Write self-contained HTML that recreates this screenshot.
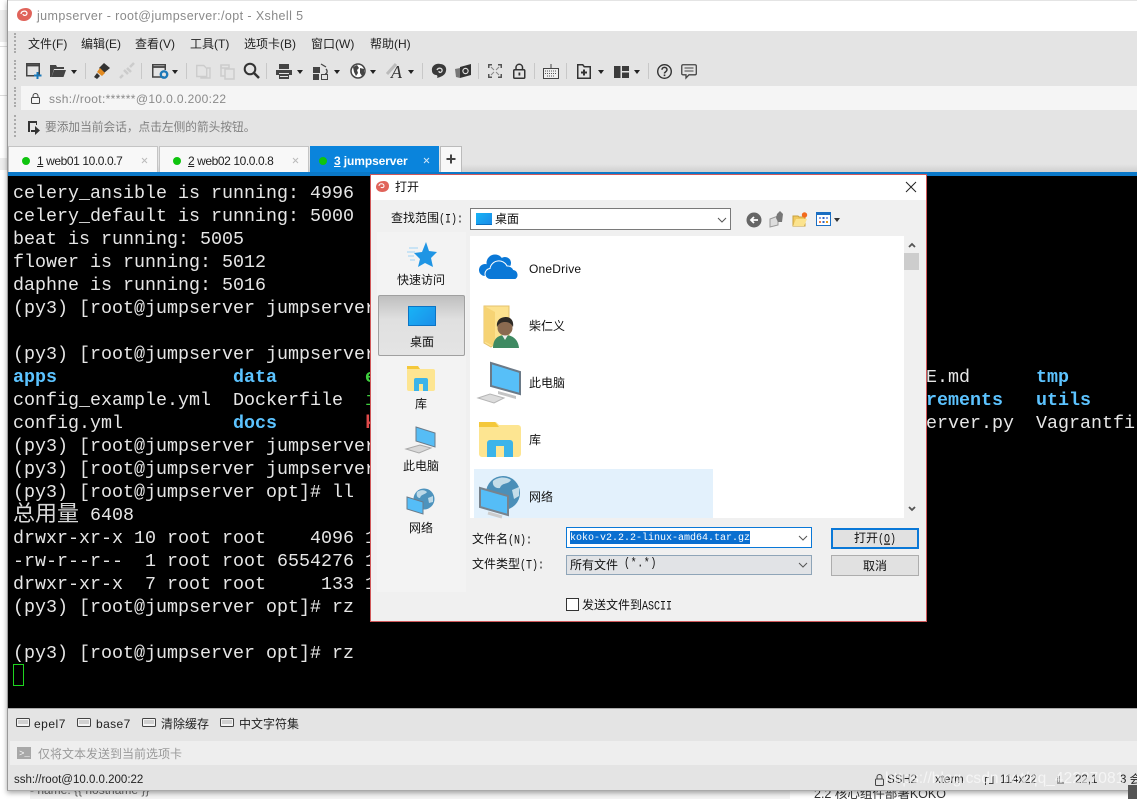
<!DOCTYPE html>
<html><head><meta charset="utf-8"><style>
html,body{margin:0;padding:0;width:1137px;height:799px;overflow:hidden;background:#fff}
body{position:relative;font-family:"Liberation Sans","Noto Sans CJK SC",sans-serif;font-size:12px;color:#222}
.a{position:absolute;white-space:pre;line-height:16px}
.b{position:absolute}
svg{position:absolute;overflow:visible}
.t{position:absolute;left:13px;font-family:"Liberation Mono","Noto Sans CJK SC",monospace;font-size:18.33px;line-height:23px;color:#e6e6e6;white-space:pre}
.bl{color:#5cc3ff;font-weight:bold}
.sep{position:absolute;width:1px;height:16px;background:#c8c8c8;top:63px}
.grip{position:absolute;left:14px;width:2px;border-left:2px dotted #aaa}
.tb{stroke:#444;fill:none;stroke-width:1.5}
.arr{position:absolute;width:0;height:0;border-left:3.5px solid transparent;border-right:3.5px solid transparent;border-top:4px solid #222;top:70px}
.m{top:36px;color:#222}
.d{color:#111;font-family:"Liberation Sans","WenQuanYi Zen Hei","Noto Sans CJK SC",sans-serif}
.p{font-family:"Liberation Mono",monospace;font-size:10px;display:inline-block;transform:scaleY(1.25)}
</style></head><body>
<!-- left backdrop -->
<div class="b" style="left:0;top:0;width:8px;height:799px;background:#fff"></div>
<div class="b" style="left:0;top:10px;width:8px;height:32px;background:#eee"></div>
<div class="b" style="left:0;top:46px;width:8px;height:1px;background:#ddd"></div>
<div class="b" style="left:0;top:95px;width:8px;height:1px;background:#ddd"></div>
<div class="b" style="left:0;top:158px;width:8px;height:12px;background:#eee"></div>
<div class="b" style="left:30px;top:780px;width:760px;height:19px;background:#f4f4f4"></div>
<div class="a" style="left:30px;top:782px;color:#666">- name: {{ hostname }}</div>
<div class="a" style="left:814px;top:786px;font-size:12.5px;color:#333">2.2 核心组件部署KOKO</div>

<!-- main window -->
<div class="b" style="left:7px;top:0;width:1130px;height:791px;background:#e4e4e4;box-shadow:0 2px 5px rgba(0,0,0,.35);border-left:1px solid #999;border-bottom:1px solid #aaa;box-sizing:border-box"></div>
<div class="b" style="left:8px;top:1px;width:1129px;height:30px;background:#fff"></div>
<svg style="left:16px;top:7px" width="17" height="15" viewBox="0 0 17 15"><path d="M1 8C1 3 6 1 10 1c3 0 6 2 6 5 0 5-4 8-8 8-4 0-7-2-7-6z" fill="#e0635a"/><path d="M5 7c0-3 5-4 6-1 0 3-4 3-4 1" fill="none" stroke="#fff" stroke-width="1.2"/></svg>
<div class="a" style="left:37px;top:8px;font-size:12.5px;color:#8a8a8a;letter-spacing:.4px">jumpserver - root@jumpserver:/opt - Xshell 5</div>

<!-- menu -->
<div class="grip" style="top:33px;height:20px"></div>
<div class="grip" style="top:60px;height:20px"></div>
<div class="grip" style="top:87px;height:20px"></div>
<div class="grip" style="top:115px;height:22px"></div>
<div class="a m" style="left:28px">文件(F)</div>
<div class="a m" style="left:81px">编辑(E)</div>
<div class="a m" style="left:135px">查看(V)</div>
<div class="a m" style="left:190px">工具(T)</div>
<div class="a m" style="left:244px">选项卡(B)</div>
<div class="a m" style="left:311px">窗口(W)</div>
<div class="a m" style="left:370px">帮助(H)</div>

<!-- toolbar -->
<svg style="left:26px;top:63px" width="16" height="16"><rect x=".75" y=".75" width="12.5" height="12" class="tb"/><path d="M1 2.500h12" stroke="#444" stroke-width="1.800"/><path d="M11.500 9v7M8 12.500h7.500" stroke="#1b78b8" stroke-width="2"/></svg>
<svg style="left:50px;top:64px" width="16" height="14"><path d="M0 1h6l1 2h7v2H4L1.500 13H0z" fill="#444"/><path d="M4 6h12l-2.500 7H1.500z" fill="#444"/></svg>
<div class="arr" style="left:71px"></div>
<div class="sep" style="left:85px"></div>
<svg style="left:93px;top:62px" width="18" height="18"><path d="M11 1l6 5-6 5-5-5z" fill="#333"/><path d="M7 6l5 5-3 3-5-4z" fill="#e28a20"/><path d="M4 11l3 3-3 3-3-2z" fill="#333"/></svg>
<svg style="left:118px;top:62px" width="18" height="18"><path d="M2 16l3-3M6 8l4 4M9 6l4 4M12 5l4-4" stroke="#ccc" stroke-width="2.500" fill="none"/></svg>
<div class="sep" style="left:141px"></div>
<svg style="left:152px;top:64px" width="18" height="16"><path d="M12 13H.75V.75h12.500V6" class="tb"/><path d="M1 3h12" stroke="#444" stroke-width="1.800"/><circle cx="12" cy="10.500" r="3.200" fill="none" stroke="#1b78b8" stroke-width="2.400"/></svg>
<div class="arr" style="left:172px"></div>
<div class="sep" style="left:186px"></div>
<svg style="left:196px;top:64px" width="15" height="15"><path d="M.75 1.500h7l3 3v8h-10zM11 4h3v10H5v-1" fill="none" stroke="#ccc" stroke-width="1.400"/></svg>
<svg style="left:220px;top:64px" width="15" height="15"><path d="M1 1h8v3H1zM5 5h9v10H5z" fill="none" stroke="#ccc" stroke-width="1.500"/><path d="M1 1v11h4" fill="none" stroke="#ccc" stroke-width="1.500"/></svg>
<svg style="left:243px;top:62px" width="17" height="17"><circle cx="7" cy="7" r="5.300" fill="none" stroke="#333" stroke-width="2"/><path d="M11 11l5 5" stroke="#333" stroke-width="2.500"/></svg>
<div class="sep" style="left:266px"></div>
<svg style="left:276px;top:64px" width="16" height="15"><path d="M3 0h10v5H3zM0 6h16v5h-3v4H3v-4H0z" fill="#444"/><path d="M3 9h10v1H3zM4 12h8v1H4z" fill="#e4e4e4"/></svg>
<div class="arr" style="left:297px"></div>
<svg style="left:313px;top:63px" width="17" height="17"><rect x="0" y="4" width="7" height="6" fill="#444"/><rect x="0" y="11" width="6" height="6" fill="#444"/><rect x="8.500" y="11.500" width="6" height="5" fill="none" stroke="#444"/><path d="M8 1l5 3M13 6c2 2 1 5-1 5" fill="none" stroke="#444" stroke-width="1.300"/></svg>
<div class="arr" style="left:334px"></div>
<svg style="left:350px;top:63px" width="16" height="16"><circle cx="8" cy="8" r="7" fill="#fff" stroke="#444" stroke-width="1.500"/><path d="M3 4l4-2 2 3-2 2 1 3-2 3-2-4zM10 5l4 1v5l-2 2-2-3z" fill="#444"/></svg>
<div class="arr" style="left:370px"></div>
<svg style="left:386px;top:62px" width="18" height="18"><path d="M1 12L10 2" stroke="#bbb" stroke-width="3"/><text x="5" y="16" font-family="Liberation Serif" font-style="italic" font-size="18" fill="#333">A</text></svg>
<div class="arr" style="left:408px"></div>
<div class="sep" style="left:422px"></div>
<svg style="left:431px;top:63px" width="16" height="16"><path d="M1 8C0 3 5 0 9 1c4 0 7 3 6 7-1 5-6 6-9 7 1-2 0-3-1-3-2 0-4-2-4-4z" fill="#3a3a3a"/><path d="M6 7c1-3 6-2 5 1-1 2-3 2-3 0" fill="none" stroke="#ddd" stroke-width="1.300"/></svg>
<svg style="left:455px;top:63px" width="17" height="16"><path d="M0 6l5-1v10l-4-1z" fill="#777"/><path d="M5 4l11-3v11L5 15z" fill="#333"/><circle cx="10.500" cy="8" r="2.600" fill="none" stroke="#ddd" stroke-width="1.200"/></svg>
<div class="sep" style="left:478px"></div>
<svg style="left:488px;top:64px" width="14" height="14"><path d="M0 0h4v1.500H1.500V4H0zM10 0h4v4h-1.500V1.500H10zM0 10h1.500v2.500H4V14H0zM14 10v4h-4v-1.500h2.500V10z" fill="#555"/><path d="M3 3l3 3M11 3L8 6M3 11l3-3M11 11L8 8" stroke="#888"/></svg>
<svg style="left:513px;top:63px" width="13" height="16"><rect x=".75" y="6.750" width="11" height="8.500" rx="1" fill="none" stroke="#333" stroke-width="1.500"/><path d="M3 7V4a3.300 3.300 0 0 1 6.500 0v3" fill="none" stroke="#333" stroke-width="1.500"/><rect x="5.500" y="9.500" width="1.800" height="3" fill="#333"/></svg>
<div class="sep" style="left:534px"></div>
<svg style="left:543px;top:64px" width="16" height="15"><rect x=".5" y="4.500" width="15" height="10" fill="#f0f0f0" stroke="#444"/><path d="M2 7h12M2 9.500h12M4 12h8" stroke="#555" stroke-dasharray="1 1"/><path d="M8 0v4" stroke="#444"/></svg>
<div class="sep" style="left:566px"></div>
<svg style="left:577px;top:64px" width="14" height="15"><path d="M.75.750h5l1.500 2h6v11.500H.75z" fill="none" stroke="#333" stroke-width="1.500"/><path d="M7 5.500v6M4 8.500h6" stroke="#333" stroke-width="2"/></svg>
<div class="arr" style="left:598px"></div>
<svg style="left:614px;top:66px" width="15" height="12"><rect width="6.500" height="12" fill="#3c3c3c"/><rect x="8" width="7" height="5" fill="#3c3c3c"/><rect x="8" y="6.500" width="7" height="5.500" fill="#3c3c3c"/></svg>
<div class="arr" style="left:634px"></div>
<div class="sep" style="left:648px"></div>
<svg style="left:657px;top:64px" width="15" height="15"><circle cx="7.500" cy="7.500" r="6.800" fill="none" stroke="#333" stroke-width="1.400"/><path d="M5 5.800c0-3.300 5-3.300 5 0 0 2-2.500 1.800-2.500 3.700" fill="none" stroke="#333" stroke-width="1.500"/><rect x="6.700" y="10.500" width="1.600" height="1.600" fill="#333"/></svg>
<svg style="left:681px;top:64px" width="16" height="16"><path d="M2 .75h12a1.300 1.300 0 0 1 1.300 1.300v7.500A1.300 1.300 0 0 1 14 10.800H8L5 14v-3.200H2A1.300 1.300 0 0 1 .75 9.500V2A1.300 1.300 0 0 1 2 .75z" fill="none" stroke="#444" stroke-width="1.300"/><path d="M3.500 4h9M3.500 7h9" stroke="#444"/></svg>

<!-- address -->
<div class="b" style="left:21px;top:86px;width:1116px;height:24px;background:#f5f5f5"></div>
<svg style="left:31px;top:93px" width="9" height="11"><rect x=".5" y="4.500" width="8" height="6" rx="1" fill="none" stroke="#444"/><path d="M2 4.500V3a2.500 2.500 0 0 1 5 0v1.500" fill="none" stroke="#444"/></svg>
<div class="a" style="left:49px;top:91px;color:#8a8a8a;font-size:12px;letter-spacing:.36px">ssh://root:******@10.0.0.200:22</div>

<!-- hint -->
<svg style="left:27px;top:121px" width="13" height="14"><path d="M1 0h9v4H9V2H3v9H1z" fill="#333"/><path d="M4 9h4V5l5 4.500L8 14v-3H4z" fill="#333"/></svg>
<div class="a" style="left:45px;top:120px;color:#808080;font-size:11.7px">要添加当前会话，点击左侧的箭头按钮。</div>

<!-- tabs -->
<div class="b" style="left:8px;top:146px;width:1129px;height:26px;background:linear-gradient(#e4e4e4 70%,#cfcfcf)"></div>
<div class="b" style="left:8px;top:146px;width:150px;height:26px;background:#f8f8f8;border:1px solid #c4c4c4;box-sizing:border-box;border-bottom:0"></div>
<div class="b" style="left:159px;top:146px;width:150px;height:26px;background:#f8f8f8;border:1px solid #c4c4c4;box-sizing:border-box;border-bottom:0"></div>
<div class="b" style="left:310px;top:146px;width:129px;height:26px;background:#0a84dc"></div>
<div class="b" style="left:440px;top:146px;width:22px;height:26px;background:#f8f8f8;border:1px solid #bbb;box-sizing:border-box;border-bottom:0"></div>
<div class="b" style="left:22px;top:157px;width:8px;height:8px;border-radius:50%;background:#0fc40f"></div>
<div class="b" style="left:173px;top:157px;width:8px;height:8px;border-radius:50%;background:#0fc40f"></div>
<div class="b" style="left:319px;top:157px;width:8px;height:8px;border-radius:50%;background:#0fc40f"></div>
<div class="a" style="left:37px;top:153px;letter-spacing:-.42px"><u>1</u> web01 10.0.0.7</div>
<div class="a" style="left:188px;top:153px;letter-spacing:-.42px"><u>2</u> web02 10.0.0.8</div>
<div class="a" style="left:334px;top:153px;color:#fff;font-weight:bold;letter-spacing:-.1px"><u>3</u> jumpserver</div>
<svg style="left:141px;top:157px" width="8" height="8"><path d="M1 1l5 5M6 1L1 6" stroke="#bbb"/></svg>
<svg style="left:292px;top:157px" width="8" height="8"><path d="M1 1l5 5M6 1L1 6" stroke="#bbb"/></svg>
<svg style="left:423px;top:157px" width="8" height="8"><path d="M1 1l5 5M6 1L1 6" stroke="#cfe6f8"/></svg>
<svg style="left:446px;top:154px" width="11" height="11"><path d="M5 .500v9M.500 5h9" stroke="#444" stroke-width="2"/></svg>
<div class="b" style="left:8px;top:172px;width:1129px;height:4px;background:#0a78c8"></div>

<!-- terminal -->
<div class="b" style="left:8px;top:176px;width:1129px;height:532px;background:#000;overflow:hidden"></div>
<div class="t" style="top:182px">celery_ansible is running: 4996</div>
<div class="t" style="top:205px">celery_default is running: 5000</div>
<div class="t" style="top:228px">beat is running: 5005</div>
<div class="t" style="top:251px">flower is running: 5012</div>
<div class="t" style="top:274px">daphne is running: 5016</div>
<div class="t" style="top:297px">(py3) [root@jumpserver jumpserver</div>
<div class="t" style="top:343px">(py3) [root@jumpserver jumpserver</div>
<div class="t bl" style="top:366px">apps</div>
<div class="t bl" style="top:366px;left:233px">data</div>
<div class="t" style="top:366px;left:365px;color:#3fd03f;font-weight:bold">e</div>
<div class="t" style="top:389px">config_example.yml</div>
<div class="t" style="top:389px;left:233px">Dockerfile</div>
<div class="t" style="top:389px;left:365px;color:#3fd03f">i</div>
<div class="t" style="top:412px">config.yml</div>
<div class="t bl" style="top:412px;left:233px">docs</div>
<div class="t" style="top:412px;left:365px;color:#e04a4a;font-weight:bold">k</div>
<div class="t" style="top:435px">(py3) [root@jumpserver jumpserver</div>
<div class="t" style="top:458px">(py3) [root@jumpserver jumpserver</div>
<div class="t" style="top:481px">(py3) [root@jumpserver opt]# ll</div>
<div class="t" style="top:504px"><span style="display:inline-block;font-size:22px;line-height:0;color:#d8d8d8;position:relative;top:1px">总用量</span> 6408</div>
<div class="t" style="top:527px">drwxr-xr-x 10 root root    4096 1</div>
<div class="t" style="top:550px">-rw-r--r--  1 root root 6554276 1</div>
<div class="t" style="top:573px">drwxr-xr-x  7 root root     133 1</div>
<div class="t" style="top:596px">(py3) [root@jumpserver opt]# rz</div>
<div class="t" style="top:642px">(py3) [root@jumpserver opt]# rz</div>
<div class="b" style="left:13px;top:664px;width:11px;height:22px;border:1px solid #1fd41f;box-sizing:border-box"></div>
<div class="t" style="top:366px;left:926px">E.md</div>
<div class="t bl" style="top:366px;left:1036px">tmp</div>
<div class="t bl" style="top:389px;left:926px">rements</div>
<div class="t bl" style="top:389px;left:1036px">utils</div>
<div class="t" style="top:412px;left:926px">erver.py</div>
<div class="t" style="top:412px;left:1036px">Vagrantfile</div>

<!-- bottom -->
<div class="b" style="left:8px;top:708px;width:1129px;height:1px;background:#aaa"></div>
<svg style="left:16px;top:718px" width="14" height="10"><rect x=".5" y=".5" width="13" height="8" rx="1" fill="#f4f4f4" stroke="#444"/><path d="M2.500 3h9M2.500 5h9" stroke="#666" stroke-dasharray="1 1"/></svg>
<div class="a" style="left:34px;top:716px;letter-spacing:.5px">epel7</div>
<svg style="left:77px;top:718px" width="14" height="10"><rect x=".5" y=".5" width="13" height="8" rx="1" fill="#f4f4f4" stroke="#444"/><path d="M2.500 3h9M2.500 5h9" stroke="#666" stroke-dasharray="1 1"/></svg>
<div class="a" style="left:96px;top:716px;letter-spacing:.4px">base7</div>
<svg style="left:142px;top:718px" width="14" height="10"><rect x=".5" y=".5" width="13" height="8" rx="1" fill="#f4f4f4" stroke="#444"/><path d="M2.500 3h9M2.500 5h9" stroke="#666" stroke-dasharray="1 1"/></svg>
<div class="a" style="left:161px;top:716px">清除缓存</div>
<svg style="left:220px;top:718px" width="14" height="10"><rect x=".5" y=".5" width="13" height="8" rx="1" fill="#f4f4f4" stroke="#444"/><path d="M2.500 3h9M2.500 5h9" stroke="#666" stroke-dasharray="1 1"/></svg>
<div class="a" style="left:239px;top:716px">中文字符集</div>
<div class="b" style="left:10px;top:741px;width:1127px;height:24px;background:#eeeeee"></div>
<div class="b" style="left:17px;top:747px;width:14px;height:12px;background:#a8a8a8"></div>
<div class="a" style="left:19px;top:746px;color:#fff;font-size:9px;font-family:'Liberation Mono',monospace">&gt;_</div>
<div class="a" style="left:38px;top:746px;color:#9a9a9a">仅将文本发送到当前选项卡</div>
<div class="a" style="left:14px;top:772px;font-size:11.5px;color:#222">ssh://root@10.0.0.200:22</div>
<svg style="left:875px;top:774px" width="9" height="12"><rect x=".5" y="5" width="8" height="6.500" rx="1" fill="none" stroke="#444"/><path d="M2 5V3a2.500 2.500 0 0 1 5 0v2" fill="none" stroke="#444"/></svg>
<div class="a" style="left:887px;top:772px;font-size:11.5px">SSH2</div>
<div class="a" style="left:935px;top:772px;font-size:11.5px">xterm</div>
<svg style="left:985px;top:776px" width="9" height="9"><path d="M.5 9V1.500H4M8 0v7.500H4" fill="none" stroke="#444"/></svg>
<div class="a" style="left:1000px;top:772px;font-size:11.5px">114x22</div>
<svg style="left:1056px;top:776px" width="9" height="9"><path d="M1 1h1M3 1h1M1 3h1M3 3h1M1 5h1M3 5h1M1 7h7" stroke="#555"/></svg>
<div class="a" style="left:1075px;top:772px;font-size:11.5px">22,1</div>
<div class="a" style="left:1120px;top:772px;font-size:11.5px">3 会</div>
<div class="a" style="left:885px;top:771px;font-size:15.6px;color:rgba(255,255,255,.62)">https://blog.csdn.net/qq_42227081</div>
<div class="b" style="left:1128px;top:785px;width:9px;height:14px;background:#555"></div>

<!-- dialog -->
<div class="b" style="left:370px;top:174px;width:557px;height:448px;background:#f0f0f0;border:1px solid #d0585a;box-sizing:border-box"></div>
<div class="b" style="left:371px;top:175px;width:555px;height:25px;background:#fff"></div>
<svg style="left:375px;top:180px" width="15" height="13"><path d="M1 7C1 3 5 1 9 1c3 0 5 2 5 5 0 4-3 6-7 6-3 0-6-2-6-5z" fill="#e0635a"/><path d="M4 6c0-3 5-3 5 0 0 2-3 2-3 1" fill="none" stroke="#fff"/></svg>
<div class="a d" style="left:395px;top:179px">打开</div>
<svg style="left:906px;top:182px" width="10" height="10"><path d="M0 0l10 10M10 0L0 10" stroke="#222"/></svg>
<div class="a d" style="left:391px;top:210px">查找范围<span class="p">(I):</span></div>
<div class="b" style="left:470px;top:208px;width:261px;height:22px;background:#fff;border:1px solid #7a7a7a;box-sizing:border-box"></div>
<div class="b" style="left:476px;top:213px;width:16px;height:12px;background:linear-gradient(135deg,#17b4f5,#1b8be8);border-bottom:1px solid #0b6fbf;box-sizing:border-box"></div>
<div class="a d" style="left:495px;top:211px">桌面</div>
<svg style="left:717px;top:217px" width="10" height="6"><path d="M1 1l4 4 4-4" fill="none" stroke="#555"/></svg>
<svg style="left:746px;top:212px" width="16" height="16"><circle cx="8" cy="8" r="7.500" fill="#666"/><path d="M12 8H5M8 5L5 8l3 3" stroke="#fff" stroke-width="1.800" fill="none"/></svg>
<svg style="left:769px;top:211px" width="15" height="17"><path d="M1 8l8-3v9l-8 2z" fill="#ddd" stroke="#999"/><path d="M7 7l1-4 3-3 3 3-1 8H9z" fill="#777"/></svg>
<svg style="left:793px;top:212px" width="15" height="16"><path d="M0 4h5l1 1h6v9H0z" fill="#f0c95e" stroke="#c9a13d"/><path d="M3 7h11l-3 7H0z" fill="#fbe38e"/><circle cx="11.500" cy="3" r="2.700" fill="#f26a1c"/></svg>
<svg style="left:816px;top:212px" width="15" height="14"><rect x=".5" y=".5" width="14" height="13" fill="#fff" stroke="#1b6ec2"/><rect x="0" y="0" width="15" height="3" fill="#1b6ec2"/><path d="M3 5h2v2H3zM10 5h2v2h-2z" fill="#8a9fe0"/><path d="M6.500 5h2v2h-2z" fill="#2a66c8"/><path d="M3 9h2v2H3z" fill="#ef7b4a"/><path d="M6.500 9h2v2h-2z" fill="#2a66c8"/><path d="M10 9h2v2h-2z" fill="#e09a20"/></svg>
<div class="b" style="left:834px;top:218px;width:0;height:0;border-left:3.500px solid transparent;border-right:3.500px solid transparent;border-top:4px solid #333"></div>

<!-- places -->
<div class="b" style="left:377px;top:232px;width:89px;height:360px;background:#f3f3f3"></div>
<svg style="left:407px;top:242px" width="30" height="28"><path d="M19 0l3 9 8 1-6 6 2 9-8-4-7 4 2-8-6-6 8-1z" fill="#1f95e4"/><path d="M2 6h9M0 10h8M1 14h6M3 18h5" stroke="#9fd3f4"/></svg>
<div class="a d" style="left:397px;top:272px">快速访问</div>
<div class="b" style="left:378px;top:295px;width:87px;height:61px;background:linear-gradient(#bfbfbf,#e0e0e0 40%,#e4e4e4);border:1px solid #a0a0a0;border-radius:2px;box-sizing:border-box"></div>
<div class="b" style="left:408px;top:306px;width:28px;height:20px;background:linear-gradient(135deg,#18b3f6,#1b8fe9);border:1px solid #0c74c4;box-sizing:border-box"></div>
<div class="a d" style="left:410px;top:334px">桌面</div>
<svg style="left:407px;top:366px" width="28" height="25"><path d="M0 2a2 2 0 0 1 2-2h8l3 3h13a2 2 0 0 1 2 2v18a2 2 0 0 1-2 2H2a2 2 0 0 1-2-2z" fill="#fde591"/><path d="M0 0h11l2 3H0z" fill="#f4c83b"/><path d="M7 25V14a2 2 0 0 1 2-2h10a2 2 0 0 1 2 2v11h-5v-7h-4v7z" fill="#3bb4e9"/></svg>
<div class="a d" style="left:415px;top:396px">库</div>
<svg style="left:405px;top:427px" width="32" height="27"><path d="M11 0l19 6v14l-19-6z" fill="#56bdf5" stroke="#6a7b8a"/><path d="M1 22l14-4 11 3-12 5z" fill="#d8d8d8" stroke="#aaa"/></svg>
<div class="a d" style="left:403px;top:458px">此电脑</div>
<svg style="left:407px;top:488px" width="28" height="29"><circle cx="17" cy="11" r="10.500" fill="#4d93bd"/><path d="M10 4c4-3 8-2 10 0-2 3-6 2-7 6-3 0-4-3-3-6zM21 10l5-2v6l-4 1z" fill="#bcd9e8"/><path d="M0 9l16 5v12L0 21z" fill="#55bdf7" stroke="#6a7b8a"/></svg>
<div class="a d" style="left:409px;top:520px">网络</div>

<!-- list -->
<div class="b" style="left:470px;top:236px;width:449px;height:282px;background:#fff"></div>
<div class="b" style="left:904px;top:236px;width:15px;height:282px;background:#f0f0f0"></div>
<div class="b" style="left:904px;top:253px;width:15px;height:17px;background:#cdcdcd"></div>
<svg style="left:908px;top:242px" width="8" height="6"><path d="M1 5l3-3 3 3" fill="none" stroke="#555" stroke-width="1.800"/></svg>
<svg style="left:908px;top:506px" width="8" height="6"><path d="M1 1l3 3 3-3" fill="none" stroke="#555" stroke-width="1.800"/></svg>
<svg style="left:479px;top:254px" width="43" height="26"><g fill="#0a78d7"><circle cx="6" cy="16" r="6"/><circle cx="16" cy="9" r="8.500"/><circle cx="26" cy="9" r="6"/></g><path d="M12 25.500a5.500 5.500 0 0 1-1-11a9 9 0 0 1 17-2.500a6.500 6.500 0 0 1 6.500 3.500a5.500 5.500 0 0 1 2 10z" fill="#0a78d7" stroke="#fff"/></svg>
<div class="a d" style="left:529px;top:261px;letter-spacing:.2px">OneDrive</div>
<svg style="left:483px;top:305px" width="36" height="44"><path d="M1 1h25v38H12l-4 3-7-4z" fill="#fde28f" stroke="#e4c26c"/><path d="M1 1l11 6v35L1 36z" fill="#f6d374"/><path d="M10 43c0-10 6-13 12-13s13 3 14 13z" fill="#3f8a62"/><path d="M19 30l3 5 3-5z" fill="#eee"/><circle cx="22" cy="23" r="7.500" fill="#8a6a50"/><path d="M14 22c-1-8 5-10 9-10 5 0 8 4 7 10-2-4-5-5-8-5s-6 1-8 5z" fill="#2e2a25"/></svg>
<div class="a d" style="left:529px;top:318px">柴仁义</div>
<svg style="left:478px;top:362px" width="44" height="42"><path d="M13 1l29 9v22l-29-8z" fill="#57bff8" stroke="#6b7a88" stroke-width="2"/><path d="M20 29l18 5v3l-18-5z" fill="#c4c4c4"/><path d="M0 36l12-4 14 4-10 5z" fill="#dcdcdc" stroke="#b5b5b5"/></svg>
<div class="a d" style="left:529px;top:375px">此电脑</div>
<svg style="left:479px;top:422px" width="42" height="36"><path d="M0 3a3 3 0 0 1 3-3h14l3 3h19a3 3 0 0 1 3 3v26a3 3 0 0 1-3 3H3a3 3 0 0 1-3-3z" fill="#fde591"/><path d="M0 0h16l4 5H0z" fill="#f4c83b"/><path d="M8 35V21a3 3 0 0 1 3-3h20a3 3 0 0 1 3 3v14h-9V24h-8v11z" fill="#3bb4e9"/></svg>
<div class="a d" style="left:529px;top:432px">库</div>
<div class="b" style="left:474px;top:469px;width:239px;height:49px;background:#e3f1fc"></div>
<svg style="left:480px;top:476px" width="40" height="42"><circle cx="23" cy="17" r="17" fill="#4b8fb8"/><path d="M13 5c6-5 14-4 18-1-3 5-9 2-11 8-5 1-8-3-7-7zM32 14l7-3v9l-5 3z" fill="#c4dde9"/><path d="M0 12l28 8v19L0 31z" fill="#55bdf7" stroke="#78838d" stroke-width="2"/><path d="M8 37l14 4" stroke="#ccc" stroke-width="3"/></svg>
<div class="a d" style="left:529px;top:489px">网络</div>

<!-- file inputs -->
<div class="a d" style="left:472px;top:531px">文件名<span class="p">(N):</span></div>
<div class="b" style="left:566px;top:527px;width:246px;height:21px;background:#fff;border:1px solid #0a78d7;box-sizing:border-box"></div>
<div class="b" style="left:570px;top:531px;width:180px;height:13px;background:#0a6fd0"></div>
<div class="a" style="left:570px;top:531px;font-family:'Liberation Mono',monospace;font-size:10px;color:#fff">koko-v2.2.2-linux-amd64.tar.gz</div>
<svg style="left:798px;top:535px" width="10" height="6"><path d="M1 1l4 4 4-4" fill="none" stroke="#555"/></svg>
<div class="a d" style="left:472px;top:556px">文件类型<span class="p">(T):</span></div>
<div class="b" style="left:566px;top:555px;width:246px;height:20px;background:#e1e3e6;border:1px solid #8fa5b8;box-sizing:border-box"></div>
<div class="a d" style="left:570px;top:557px">所有文件</div>
<div class="a p" style="left:624px;top:557px;letter-spacing:.6px;color:#111">(*.*)</div>
<svg style="left:798px;top:562px" width="10" height="6"><path d="M1 1l4 4 4-4" fill="none" stroke="#555"/></svg>
<div class="b" style="left:831px;top:528px;width:88px;height:21px;background:#e1e1e1;border:2px solid #0a78d7;box-sizing:border-box"></div>
<div class="a d" style="left:854px;top:530px">打开<span class="p">(<u>O</u>)</span></div>
<div class="b" style="left:831px;top:555px;width:88px;height:21px;background:#e1e1e1;border:1px solid #adadad;box-sizing:border-box"></div>
<div class="a d" style="left:863px;top:558px">取消</div>
<div class="b" style="left:566px;top:598px;width:13px;height:13px;background:#fff;border:1px solid #333;box-sizing:border-box"></div>
<div class="a d" style="left:582px;top:597px">发送文件到<span class="p">ASCII</span></div>
</body></html>
